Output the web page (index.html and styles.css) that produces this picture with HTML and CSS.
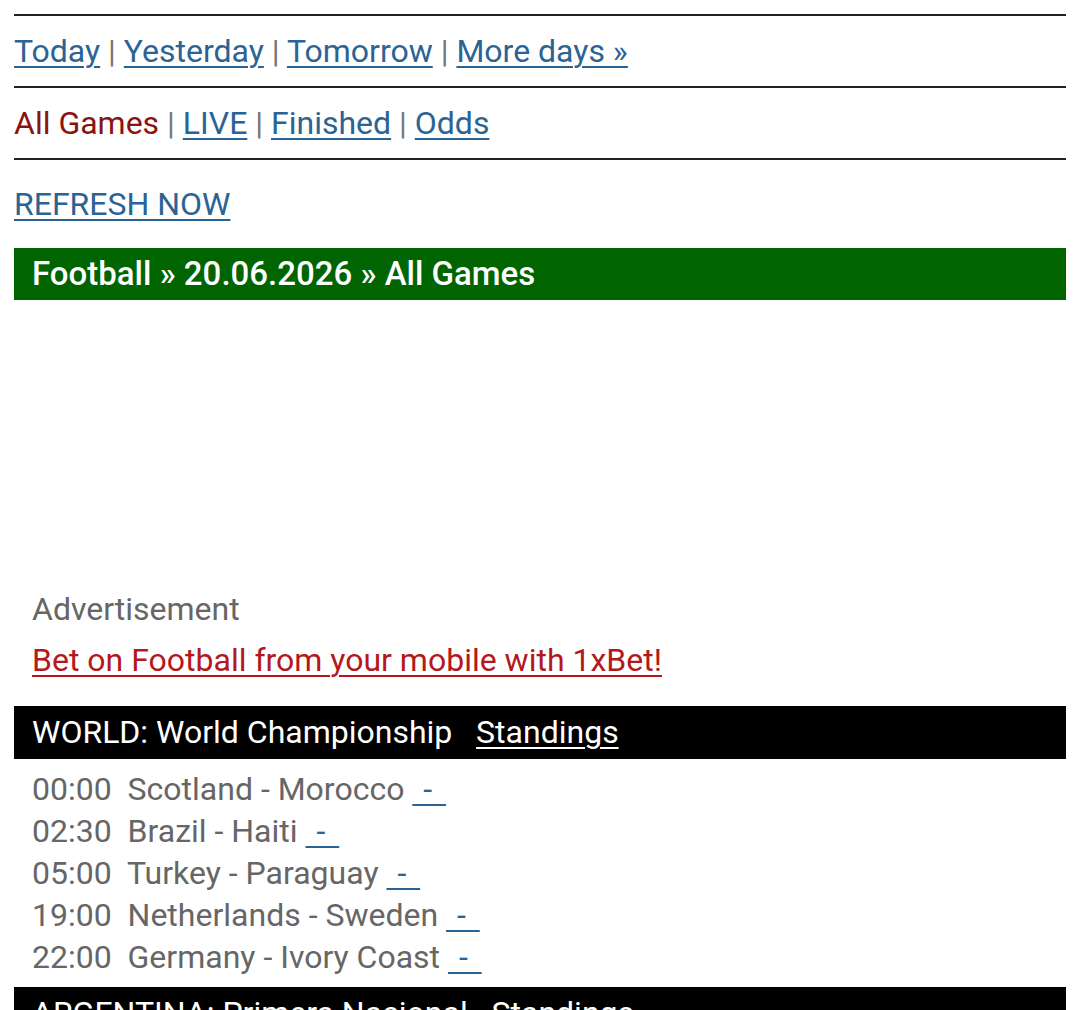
FILE: index.html
```html
<!DOCTYPE html>
<html lang="en">
	<head>
		<meta charset="utf-8">
		<link rel="stylesheet" href="styles.css">
	</head>

	<body>
		<div class="menu">
			<a href="#">Today</a> <span class="sep">|</span>
			<a href="#">Yesterday</a> <span class="sep">|</span>
			<a href="#">Tomorrow</a> <span class="sep">|</span>
			<a href="#">More days &raquo;</a>
		</div>

		<div class="menu">
			<span class="current">All Games</span> <span class="sep">|</span>
			<a href="#">LIVE</a> <span class="sep">|</span>
			<a href="#">Finished</a> <span class="sep">|</span>
			<a href="#">Odds</a>
		</div>

		<div class="refresh">
			<a href="#">REFRESH NOW</a>
		</div>

		<h1 class="title">Football &raquo; 20.06.2026 &raquo; All Games</h1>

		<div class="ad-space"></div>

		<div class="ad">
			<p class="ad-label">Advertisement</p>
			<p class="ad-link"><a href="#">Bet on Football from your mobile with 1xBet!</a></p>
		</div>

		<div class="league">WORLD: World Championship&nbsp;&nbsp; <a href="#">Standings</a></div>
		<div class="games">
			<div class="game">00:00&nbsp; Scotland - Morocco <a class="score" href="#">&nbsp;-&nbsp;</a></div>
			<div class="game">02:30&nbsp; Brazil - Haiti <a class="score" href="#">&nbsp;-&nbsp;</a></div>
			<div class="game">05:00&nbsp; Turkey - Paraguay <a class="score" href="#">&nbsp;-&nbsp;</a></div>
			<div class="game">19:00&nbsp; Netherlands - Sweden <a class="score" href="#">&nbsp;-&nbsp;</a></div>
			<div class="game">22:00&nbsp; Germany - Ivory Coast <a class="score" href="#">&nbsp;-&nbsp;</a></div>
		</div>

		<div class="league">ARGENTINA: Primera Nacional&nbsp;&nbsp; <a href="#">Standings</a></div>
		<div class="games">
			<div class="game">01:00&nbsp; Deportivo Madryn - Quilmes <a class="score" href="#">&nbsp;-&nbsp;</a></div>
		</div>
	</body>
</html>
```

FILE: styles.css
```css
body {
	margin: 14px;
	font-family: Roboto, "Liberation Sans", sans-serif;
	font-size: 32px;
	color: #666;
	background-color: white;
}

a {
	color: #2b6494;
	text-decoration-thickness: 2px;
	text-underline-offset: 4px;
}

.menu {
	border-top: 2px solid #222;
	padding: 17px 0;
	line-height: 36px;
}

.sep {
	color: #777;
}

.current {
	color: #8b1212;
}

.refresh {
	border-top: 2px solid #222;
	padding: 24px 0;
	line-height: 40px;
}

.title {
	margin: 0;
	background-color: #006400;
	color: white;
	font-size: 33px;
	font-weight: 500;
	line-height: 52px;
	padding: 0 18px;
}

.ad-space {
	height: 288px;
}

.ad {
	padding: 0 18px 25px;
}

.ad p {
	margin: 0;
	line-height: 42px;
}

.ad-link {
	margin-top: 9px !important;
}

.ad-link a {
	color: #b3191c;
}

.league {
	background-color: black;
	color: white;
	line-height: 53px;
	padding: 0 18px;
}

.league a {
	color: white;
}

.games {
	padding: 9px 18px;
}

.game {
	line-height: 42px;
}

.score {
	letter-spacing: 3px;
}
```
